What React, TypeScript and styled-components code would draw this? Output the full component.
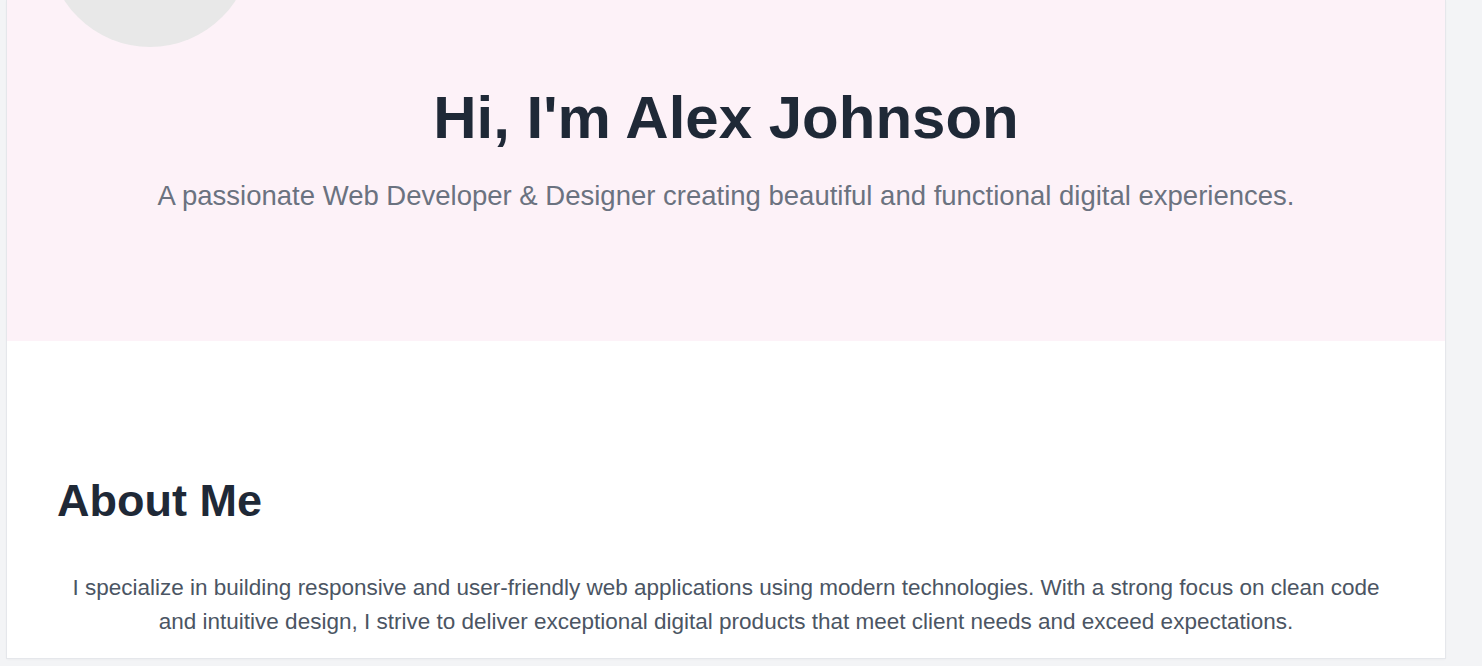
import React from "react";
import styled, { createGlobalStyle } from "styled-components";

const Global = createGlobalStyle`
  html, body { margin: 0; padding: 0; }
  body {
    background: #f3f4f6;
    font-family: "Liberation Sans", Arial, sans-serif;
    overflow: hidden;
  }
`;

const Page = styled.div`
  padding: 0 37px 0 7px;
  height: 666px;
  overflow: hidden;
`;

const Container = styled.main`
  background: #ffffff;
  height: 658px;
  box-shadow: 0 0 0 1px #e5e7eb, 0 1px 3px rgba(0, 0, 0, 0.06);
  overflow: hidden;
`;

const Hero = styled.section`
  background: #fdf2f8;
  height: 341px;
  display: flex;
  flex-direction: column;
  align-items: center;
  box-sizing: border-box;
`;

const AvatarRow = styled.div`
  align-self: stretch;
  padding-left: 41px;
  margin-top: -157px;
`;

const Avatar = styled.div`
  width: 204px;
  height: 204px;
  border-radius: 50%;
  background: #e8e8e8;
`;

const Title = styled.h1`
  margin: 35px 0 0;
  font-size: 60px;
  font-weight: 700;
  color: #1f2937;
  line-height: 1.2;
`;

const Subtitle = styled.p`
  margin: 23px 0 0;
  font-size: 27.5px;
  color: #6b7280;
  line-height: 1.4;
`;

const About = styled.section`
  padding: 133px 50px 0;
`;

const SectionTitle = styled.h2`
  margin: 0 0 0;
  font-size: 45px;
  font-weight: 700;
  color: #1f2937;
  line-height: 1.2;
`;

const Paragraph = styled.p`
  margin: 43px 0 0;
  font-size: 22.5px;
  line-height: 34px;
  color: #4b5563;
  text-align: center;
`;

export default function App() {
  return (
    <>
      <Global />
      <Page>
        <Container>
          <Hero>
            <AvatarRow>
              <Avatar />
            </AvatarRow>
            <Title>Hi, I'm Alex Johnson</Title>
            <Subtitle>
              A passionate Web Developer &amp; Designer creating beautiful and functional digital experiences.
            </Subtitle>
          </Hero>
          <About>
            <SectionTitle>About Me</SectionTitle>
            <Paragraph>
              I specialize in building responsive and user-friendly web applications using modern technologies. With a
              strong focus on clean code and intuitive design, I strive to deliver exceptional digital products that
              meet client needs and exceed expectations.
            </Paragraph>
          </About>
        </Container>
      </Page>
    </>
  );
}
